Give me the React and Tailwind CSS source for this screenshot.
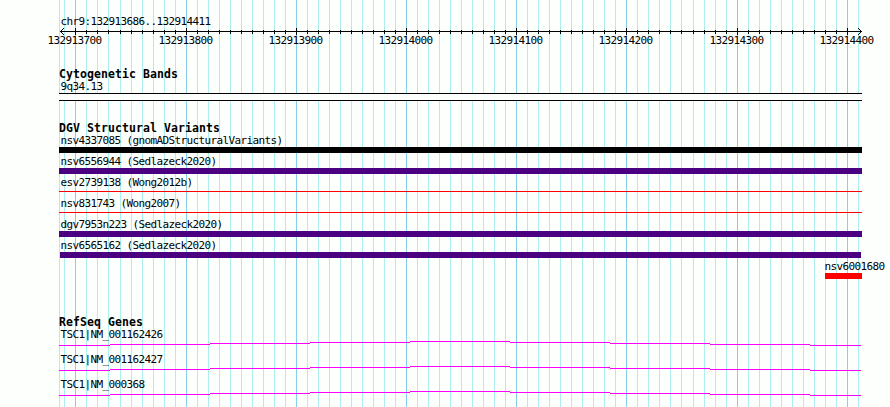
import React from 'react';

const START = 59;
const MAJOR = [75, 186, 296, 406, 516, 626, 737, 847];
const MINOR = [];
for (let x = 64; x < 862; x += x === 108 || x === 681 ? 12 : 11) {
  if (!MAJOR.includes(x)) MINOR.push(x);
}

const SCALE = [
  { text: '132913700', w: 111 },
  { text: '132913800', w: 110 },
  { text: '132913900', w: 110 },
  { text: '132914000', w: 110 },
  { text: '132914100', w: 110 },
  { text: '132914200', w: 111 },
  { text: '132914300', w: 110 },
  { text: '132914400', w: 60 },
];

const VARIANTS = [
  { name: 'nsv4337085 (gnomADStructuralVariants)', bar: 'h-[6px] w-[803px] bg-black' },
  { name: 'nsv6556944 (Sedlazeck2020)', bar: 'h-[6px] w-[803px] bg-[#4b0082]' },
  { name: 'esv2739138 (Wong2012b)', bar: 'mt-[2px] h-px w-[803px] bg-[#ff0000]' },
  { name: 'nsv831743 (Wong2007)', bar: 'mt-[2px] h-px w-[803px] bg-[#ff0000]' },
  { name: 'dgv7953n223 (Sedlazeck2020)', bar: 'h-[6px] w-[803px] bg-[#4b0082]' },
  { name: 'nsv6565162 (Sedlazeck2020)', bar: 'ml-px h-[6px] w-[801px] bg-[#4b0082]' },
  { name: 'nsv6001680', bar: 'ml-[2px] h-[6px] w-[37px] bg-[#ff0000]', row: 'ml-[764px]' },
];

const GENES = ['TSC1|NM_001162426', 'TSC1|NM_001162427', 'TSC1|NM_000368'];

// intron hat, one pixel up per step to the middle and back down
const INTRON = [
  [0, 51, 4], [51, 100, 3], [151, 100, 2], [251, 100, 1], [351, 100, 0],
  [451, 100, 1], [551, 100, 2], [651, 100, 3], [751, 51, 4],
];

function Grid() {
  return (
    <svg className="absolute inset-0" width="890" height="407" shapeRendering="crispEdges">
      <rect x={START} y="0" width="1" height="407" fill="#afeeee" />
      {MINOR.map((x) => <rect key={x} x={x} y="0" width="1" height="407" fill="#afeeee" />)}
      {MAJOR.map((x) => <rect key={x} x={x} y="0" width="1" height="407" fill="#87ceeb" />)}
    </svg>
  );
}

function Axis() {
  return (
    <svg className="block" width="890" height="7" shapeRendering="crispEdges">
      <rect x="60" y="3" width="802" height="1" />
      {MINOR.filter((x) => x > 64 && x < 858).map((x) => <rect key={x} x={x} y="2" width="1" height="4" />)}
      {MAJOR.map((x) => <rect key={x} x={x} y="0" width="1" height="7" />)}
      {[1, 2, 3].map((i) => (
        <g key={i}>
          <rect x={60 + i} y={3 - i} width="1" height="1" />
          <rect x={60 + i} y={3 + i} width="1" height="1" />
          <rect x={861 - i} y={3 - i} width="1" height="1" />
          <rect x={861 - i} y={3 + i} width="1" height="1" />
        </g>
      ))}
    </svg>
  );
}

function Label({ children }) {
  return <div className="h-[13px] whitespace-pre pl-[1.4px] text-[11px] leading-[13px] tracking-[-0.622px]">{children}</div>;
}

function Title({ children }) {
  return <h2 className="h-[12px] whitespace-pre text-[11.5px] font-bold leading-[13px] tracking-[0.077px]">{children}</h2>;
}

export default function App() {
  return (
    <div className="relative h-[407px] w-[890px] overflow-hidden bg-[#fdfffc] font-['DejaVu_Sans_Mono',monospace] text-black">
      <Grid />
      <div className="relative flex flex-col pt-[15px]">
        <div className="pl-[59px]"><Label>chr9:132913686..132914411</Label></div>
        <Axis />
        <div className="-mt-px flex pl-[46px]">
          {SCALE.map((s) => (
            <div key={s.text} className="shrink-0" style={{ width: s.w }}><Label>{s.text}</Label></div>
          ))}
        </div>

        <section className="pl-[59px] pt-[21px]">
          <Title>Cytogenetic Bands</Title>
          <Label>9q34.13</Label>
          <div className="h-[8px] w-[803px] border-y border-black bg-[#fdfffc]" />
        </section>

        <section className="pl-[59px] pt-[21px]">
          <Title>DGV Structural Variants</Title>
          {VARIANTS.map((v) => (
            <div key={v.name} className={`h-[21px] ${v.row ?? ''}`}>
              <Label>{v.name}</Label>
              <div className={`relative ${v.bar}`} />
            </div>
          ))}
        </section>

        <section className="pl-[59px] pt-[35px]">
          <Title>RefSeq Genes</Title>
          {GENES.map((g) => (
            <div key={g} className="h-[25px]">
              <Label>{g}</Label>
              <svg className="block" width="803" height="5" shapeRendering="crispEdges">
                {INTRON.map(([x, w, y]) => <rect key={x} x={x} y={y} width={w} height="1" fill="#ff00ff" />)}
              </svg>
            </div>
          ))}
        </section>
      </div>
    </div>
  );
}
